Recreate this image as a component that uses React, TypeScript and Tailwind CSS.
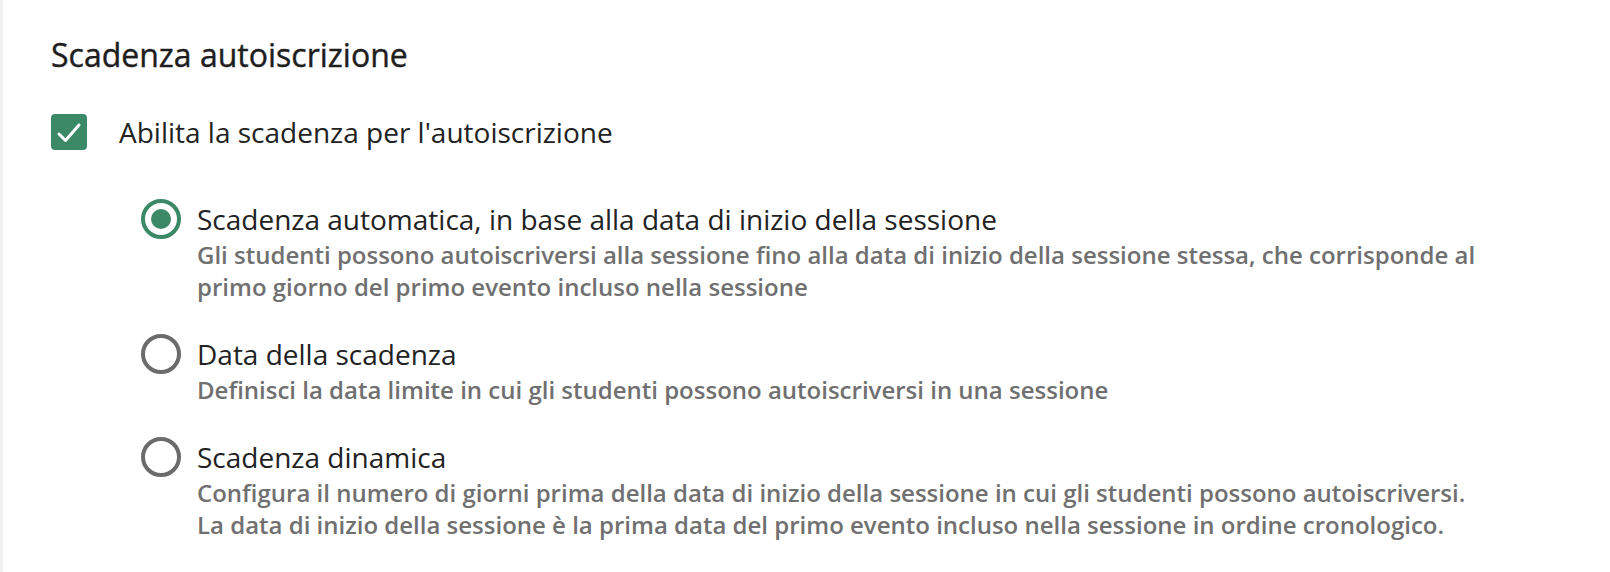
type Option = {
  id: string;
  label: string;
  description: React.ReactNode;
  selected?: boolean;
};

const options: Option[] = [
  {
    id: 'auto',
    label: 'Scadenza automatica, in base alla data di inizio della sessione',
    description:
      'Gli studenti possono autoiscriversi alla sessione fino alla data di inizio della sessione stessa, che corrisponde al primo giorno del primo evento incluso nella sessione',
    selected: true,
  },
  {
    id: 'date',
    label: 'Data della scadenza',
    description: 'Definisci la data limite in cui gli studenti possono autoiscriversi in una sessione',
  },
  {
    id: 'dynamic',
    label: 'Scadenza dinamica',
    description: (
      <>
        Configura il numero di giorni prima della data di inizio della sessione in cui gli studenti possono autoiscriversi.
        <br />
        La data di inizio della sessione è la prima data del primo evento incluso nella sessione in ordine cronologico.
      </>
    ),
  },
];

function Radio({ selected }: { selected?: boolean }) {
  // Selected radio: green ring with a filled dot
  if (selected) {
    return (
      <span className="flex h-10 w-10 shrink-0 items-center justify-center rounded-full border-4 border-[#3b8966]">
        <span className="h-5 w-5 rounded-full bg-[#3b8966]" />
      </span>
    );
  }
  return <span className="h-10 w-10 shrink-0 rounded-full border-4 border-[#6b6b6b]" />;
}

export default function App() {
  return (
    <div className="min-h-[572px] w-full border-l-[3px] border-[#f1f1f1] bg-white font-['Open_Sans',sans-serif] text-[#222222]">
      <div className="pl-[48px] pr-[100px] pt-[35px]">
        <h2 className="text-[32px] font-normal leading-[40px] text-[#1e1e1e] [-webkit-text-stroke:0.4px_#1e1e1e]">
          Scadenza autoiscrizione
        </h2>

        {/* Enable checkbox */}
        <label className="mt-[39px] flex items-center gap-[32px]">
          <span className="flex h-9 w-9 items-center justify-center rounded-[4px] bg-[#3b8966]">
            <svg viewBox="0 0 36 36" className="h-9 w-9" fill="none" stroke="white" strokeWidth={3} strokeLinecap="round" strokeLinejoin="round">
              <path d="M8 20 L14.5 26.5 L28 11" />
            </svg>
          </span>
          <span className="text-[28px] leading-[36px]">Abilita la scadenza per l'autoiscrizione</span>
        </label>

        <div className="mt-[49px] flex flex-col gap-[31px] pl-[90px]">
          {options.map((opt) => (
            <div key={opt.id} className="flex items-start gap-[16px]">
              <Radio selected={opt.selected} />
              <div className="flex flex-col">
                <span className="text-[28px] leading-[40px]">{opt.label}</span>
                <p className="text-[24px] font-semibold leading-[32px] text-[#707070]">
                  {opt.description}
                </p>
              </div>
            </div>
          ))}
        </div>
      </div>
    </div>
  );
}
